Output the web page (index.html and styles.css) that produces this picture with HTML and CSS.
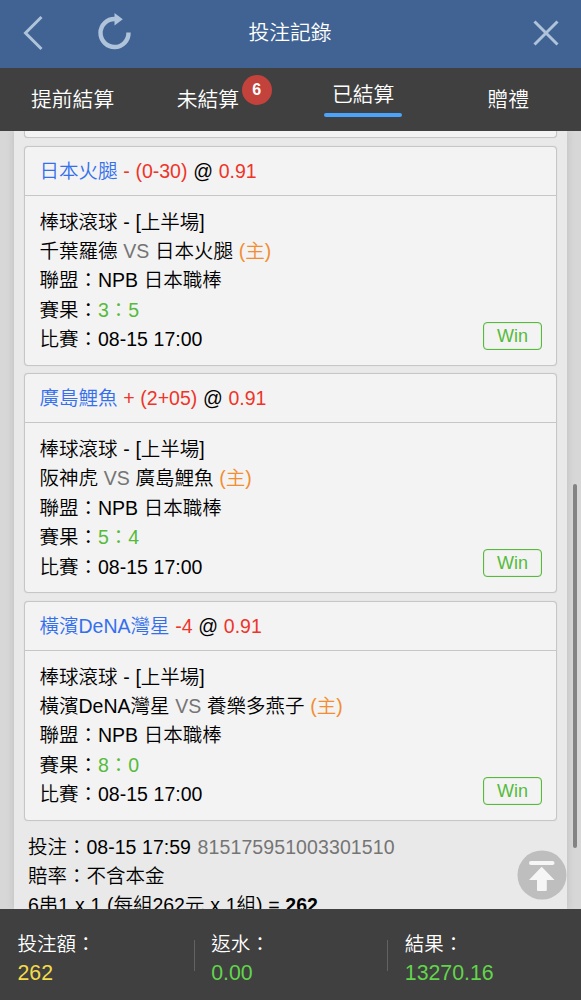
FILE: index.html
```
<!DOCTYPE html>
<html lang="zh-Hant">
<head>
    <meta charset="UTF-8">
    <meta name="viewport" content="width=device-width, initial-scale=1.0">
    <title>投注記錄</title>
    <link rel="stylesheet" href="styles.css">
</head>
<body>
    <header class="header">
        <svg class="icon-back" width="20" height="36" viewBox="0 0 20 36"><path d="M18.5 2 L2.5 18 L18.5 34"/></svg>
        <svg class="icon-refresh" width="34" height="38" viewBox="0 0 34 38">
            <path class="ring" d="M17 7 A14 14 0 1 0 30.5 20.5"/>
            <path class="tip" d="M16.5 1 L24.8 7.2 L16.5 13.4 Z"/>
        </svg>
        <h1>投注記錄</h1>
        <svg class="icon-close" width="26" height="26" viewBox="0 0 26 26"><path d="M1.5 1.5 L24.5 24.5 M24.5 1.5 L1.5 24.5"/></svg>
    </header>

    <nav class="tabs">
        <div class="tab"><span>提前結算</span></div>
        <div class="tab has-badge"><span>未結算<b class="badge">6</b></span></div>
        <div class="tab active"><span>已結算</span></div>
        <div class="tab"><span>贈禮</span></div>
    </nav>

    <main class="content">
        <div class="panel">
            <div class="card card-prev"></div>

            <div class="card">
                <div class="card-head"><span class="team">日本火腿</span> <span class="red">- (0-30)</span> @ <span class="red">0.91</span></div>
                <div class="card-body">
                    <div class="info">
                        <p>棒球滾球 - [上半場]</p>
                        <p>千葉羅德 <span class="vs">VS</span> 日本火腿 <span class="home">(主)</span></p>
                        <p>聯盟：NPB 日本職棒</p>
                        <p>賽果：<span class="score">3：5</span></p>
                        <p>比賽：08-15 17:00</p>
                    </div>
                    <span class="win">Win</span>
                </div>
            </div>

            <div class="card">
                <div class="card-head"><span class="team">廣島鯉魚</span> <span class="red">+ (2+05)</span> @ <span class="red">0.91</span></div>
                <div class="card-body">
                    <div class="info">
                        <p>棒球滾球 - [上半場]</p>
                        <p>阪神虎 <span class="vs">VS</span> 廣島鯉魚 <span class="home">(主)</span></p>
                        <p>聯盟：NPB 日本職棒</p>
                        <p>賽果：<span class="score">5：4</span></p>
                        <p>比賽：08-15 17:00</p>
                    </div>
                    <span class="win">Win</span>
                </div>
            </div>

            <div class="card">
                <div class="card-head"><span class="team">橫濱DeNA灣星</span> <span class="red">-4</span> @ <span class="red">0.91</span></div>
                <div class="card-body">
                    <div class="info">
                        <p>棒球滾球 - [上半場]</p>
                        <p>橫濱DeNA灣星 <span class="vs">VS</span> 養樂多燕子 <span class="home">(主)</span></p>
                        <p>聯盟：NPB 日本職棒</p>
                        <p>賽果：<span class="score">8：0</span></p>
                        <p>比賽：08-15 17:00</p>
                    </div>
                    <span class="win">Win</span>
                </div>
            </div>

            <div class="summary">
                <p>投注：08-15 17:59 <span class="vs order-no">815175951003301510</span></p>
                <p>賠率：不含本金</p>
                <p>6串1 x 1 (每組262元 x 1組) = <b>262</b></p>
            </div>
        </div>

        <div class="scrollbar"></div>
        <svg class="to-top" width="50" height="50" viewBox="0 0 50 50">
            <circle cx="25" cy="25" r="24.5"/>
            <rect x="12" y="11" width="25.5" height="4" rx="2"/>
            <path d="M24.7 16.7 L37.5 30 H29.8 V40 Q29.8 41 28.8 41 H21 Q20 41 20 40 V30 H12 Z"/>
        </svg>
    </main>

    <footer class="totals">
        <div class="total">
            <p>投注額：</p>
            <p class="num yellow">262</p>
        </div>
        <div class="total">
            <p>返水：</p>
            <p class="num green">0.00</p>
        </div>
        <div class="total">
            <p>結果：</p>
            <p class="num green">13270.16</p>
        </div>
    </footer>
</body>
</html>
```
FILE: styles.css
```
* {
    box-sizing: border-box;
}
body {
    margin: 0;
    height: 1000px;
    display: flex;
    flex-direction: column;
    overflow: hidden;
    background-color: #d7d7d7;
    color: #000;
    font-family: "Liberation Sans", "Noto Sans CJK TC", sans-serif;
    font-size: 19.5px;
    font-weight: 350;
    line-height: 29.4px;
    word-spacing: 0.3px;
}
p, h1 {
    margin: 0;
}
svg {
    display: block;
}

/* header */
.header {
    position: relative;
    flex: 0 0 68px;
    display: flex;
    align-items: center;
    padding: 0 22px 2px 23px;
    background-color: #406393;
}
.header h1 {
    position: absolute;
    left: 0;
    right: 1px;
    text-align: center;
    color: #fff;
    font-size: 20.8px;
    font-weight: 350;
}
.header path {
    fill: none;
    stroke: #afc3da;
    stroke-width: 3;
}
.icon-refresh {
    margin: 0 auto 4px 55px;
}
.header .ring {
    stroke-width: 4.4;
}
.header .tip {
    fill: #afc3da;
    stroke: none;
}

/* tabs */
.tabs {
    flex: 0 0 63px;
    display: grid;
    grid-template-columns: repeat(4, 1fr);
    background-color: #404040;
    color: #fff;
    font-size: 20.8px;
}
.tab {
    display: flex;
    justify-content: center;
    align-items: center;
}
.tab span {
    position: relative;
}
.has-badge {
    padding-right: 20px;
}
.badge {
    position: absolute;
    left: 65px;
    top: -10px;
    width: 30px;
    height: 30px;
    border-radius: 50%;
    background-color: #c3423c;
    font-size: 16px;
    font-weight: bold;
    line-height: 30px;
    text-align: center;
}
.active {
    padding-bottom: 2px;
}
.active span {
    padding: 0 7.5px 4px;
}
.active span::after {
    content: "";
    display: block;
    height: 4px;
    margin: 4px -7.5px -4px;
    border-radius: 2px;
    background-color: #4ba3fb;
}

/* list */
.content {
    position: relative;
    flex: 1;
    min-height: 0;
    overflow: hidden;
}
.panel {
    height: 100%;
    margin: 0 14px;
    padding: 0 10px;
    background-color: #e9e9e9;
    box-shadow: 0 0 8px rgba(0, 0, 0, 0.12);
}
.card {
    margin-bottom: 7.5px;
    border: 1px solid #c6c6c6;
    border-radius: 4px;
    background-color: #f3f3f3;
    box-shadow: 0 0 1px #c6c6c6;
}
.card-prev {
    height: 7px;
    border-top: none;
    border-radius: 0 0 4px 4px;
}
.card-head {
    height: 49px;
    padding-left: 14.5px;
    border-bottom: 1px solid #c6c6c6;
    line-height: 48px;
}
.card-body {
    display: flex;
    justify-content: space-between;
    align-items: flex-start;
    height: 169px;
    padding: 12px 14px 0 14.5px;
}
.team {
    color: #3470ee;
}
.red {
    color: #ef3529;
}
.vs {
    color: #757575;
}
.order-no {
    margin-left: 1px;
    letter-spacing: 0.1px;
}
.home {
    color: #f28d32;
}
.score {
    color: #56bb3b;
}
.win {
    align-self: flex-end;
    width: 59px;
    height: 28px;
    margin-bottom: 15px;
    border: 1px solid #56bb3b;
    border-radius: 4px;
    box-shadow: inset 0 0 1px #56bb3b;
    color: #56bb3b;
    font-size: 18px;
    line-height: 26px;
    text-align: center;
}
.summary {
    padding: 4.5px 4px;
}
.scrollbar {
    position: absolute;
    top: 353px;
    right: 4px;
    width: 4px;
    height: 364px;
    border-radius: 2px;
    background-color: #838383;
}
.to-top {
    position: absolute;
    top: 719px;
    right: 14px;
}
.to-top circle {
    fill: #bebebe;
}
.to-top rect, .to-top path {
    fill: #f6f6f6;
}

/* totals */
.totals {
    flex: 0 0 91px;
    display: grid;
    grid-template-columns: repeat(3, 1fr);
    padding-top: 21px;
    background-color: #404040;
    color: #fff;
}
.total {
    position: relative;
    padding-left: 17.5px;
}
.total + .total::before {
    content: "";
    position: absolute;
    left: 0;
    top: 10px;
    width: 1px;
    height: 31px;
    background-color: #626262;
}
.num {
    font-size: 21.3px;
}
.yellow {
    color: #f3db49;
}
.green {
    color: #62d54a;
}
```
